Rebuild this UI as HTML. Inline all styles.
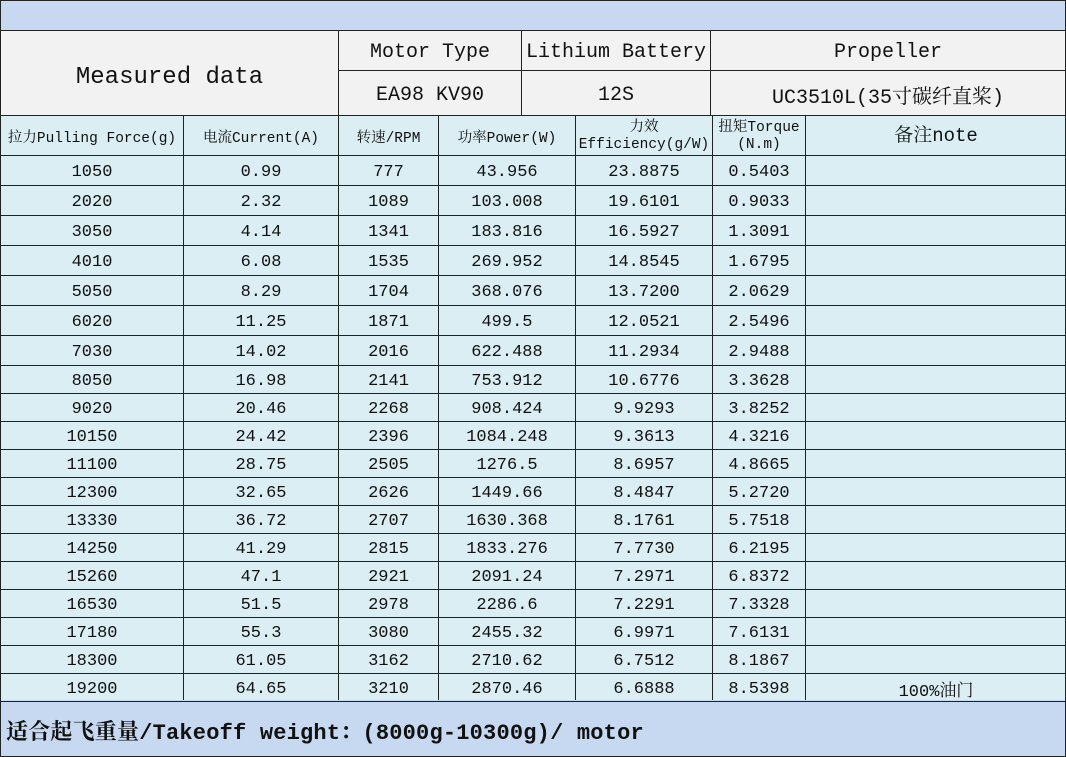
<!DOCTYPE html>
<html><head><meta charset="utf-8"><style>
body{margin:0;width:1066px;height:757px;overflow:hidden;background:#fff;font-family:"Liberation Mono","Noto Serif CJK SC",monospace;color:#111;position:relative}
.c{position:absolute;box-sizing:border-box;display:flex;align-items:center;justify-content:center;text-align:center;white-space:nowrap}
.d{background:#daeef3;font-size:17px}
.h{background:#f2f2f2}
.l{position:absolute;background:#222}
</style></head><body>
<div class="c" style="left:0;top:0;width:1066px;height:31px;background:#c6d9f0"></div>
<div class="c h" style="left:0;top:30px;width:339px;height:86px;font-size:24px;padding-top:8px">Measured data</div>
<div class="c h" style="left:338px;top:30px;width:184px;height:41px;font-size:20px;padding-top:4px">Motor Type</div>
<div class="c h" style="left:521px;top:30px;width:190px;height:41px;font-size:20px;padding-top:4px">Lithium Battery</div>
<div class="c h" style="left:710px;top:30px;width:356px;height:41px;font-size:20px;padding-top:4px">Propeller</div>
<div class="c h" style="left:338px;top:70px;width:184px;height:46px;font-size:20px;padding-top:4px">EA98 KV90</div>
<div class="c h" style="left:521px;top:70px;width:190px;height:46px;font-size:20px;padding-top:4px">12S</div>
<div class="c h" style="left:710px;top:70px;width:356px;height:46px;font-size:20px;padding-top:4px">UC3510L(35寸碳纤直桨)</div>
<div id="t"></div>
<div class="c" style="left:0;top:700px;width:1066px;height:57px;background:#c6d9f0;justify-content:flex-start;padding-left:6px;padding-top:4px;font-size:22px;font-weight:bold;letter-spacing:0.2px">适合起飞重量/Takeoff weight：(8000g-10300g)/ motor</div>
<div id="g"></div>
<script>
var xs=[0,183,338,438,575,712,805,1066];
var hd=['拉力Pulling Force(g)','电流Current(A)','转速/RPM','功率Power(W)','力效<br>Efficiency(g/W)','扭矩Torque<br>(N.m)','备注note'];
var rows=[
['1050','0.99','777','43.956','23.8875','0.5403',''],
['2020','2.32','1089','103.008','19.6101','0.9033',''],
['3050','4.14','1341','183.816','16.5927','1.3091',''],
['4010','6.08','1535','269.952','14.8545','1.6795',''],
['5050','8.29','1704','368.076','13.7200','2.0629',''],
['6020','11.25','1871','499.5','12.0521','2.5496',''],
['7030','14.02','2016','622.488','11.2934','2.9488',''],
['8050','16.98','2141','753.912','10.6776','3.3628',''],
['9020','20.46','2268','908.424','9.9293','3.8252',''],
['10150','24.42','2396','1084.248','9.3613','4.3216',''],
['11100','28.75','2505','1276.5','8.6957','4.8665',''],
['12300','32.65','2626','1449.66','8.4847','5.2720',''],
['13330','36.72','2707','1630.368','8.1761','5.7518',''],
['14250','41.29','2815','1833.276','7.7730','6.2195',''],
['15260','47.1','2921','2091.24','7.2971','6.8372',''],
['16530','51.5','2978','2286.6','7.2291','7.3328',''],
['17180','55.3','3080','2455.32','6.9971','7.6131',''],
['18300','61.05','3162','2710.62','6.7512','8.1867',''],
['19200','64.65','3210','2870.46','6.6888','8.5398','100%油门']];
var h='',g='';
function hl(x,y,w){g+='<div class="l" style="left:'+x+'px;top:'+y+'px;width:'+w+'px;height:1px"></div>';}
function vl(x,y,hh){g+='<div class="l" style="left:'+x+'px;top:'+y+'px;width:1px;height:'+hh+'px"></div>';}
for(var i=0;i<7;i++){var fs=i==6?19:14.5;var lh=i>=4?'line-height:17px;':'';
h+='<div class="c d" style="left:'+xs[i]+'px;top:115px;width:'+(xs[i+1]-xs[i]+1)+'px;height:41px;font-size:'+fs+'px;padding-top:2px;'+lh+'"><div>'+hd[i]+'</div></div>';}
var y=155;hl(0,115,1066);hl(0,155,1066);
for(var r=0;r<rows.length;r++){var rh=r<7?30:28;
for(var i=0;i<7;i++){h+='<div class="c d" style="left:'+xs[i]+'px;top:'+y+'px;width:'+(xs[i+1]-xs[i]+1)+'px;height:'+(rh+1)+'px;font-size:17px;padding-top:3px">'+rows[r][i]+'</div>';}
y+=rh;hl(0,y,1066);}
for(var i=1;i<7;i++)vl(xs[i],115,585);
hl(0,0,1066);hl(0,30,1066);hl(338,70,728);hl(0,756,1066);
vl(0,0,757);vl(1065,0,757);vl(338,30,86);vl(521,30,86);vl(710,30,86);
document.getElementById('t').innerHTML=h;
document.getElementById('g').innerHTML=g;
</script>
</body></html>
